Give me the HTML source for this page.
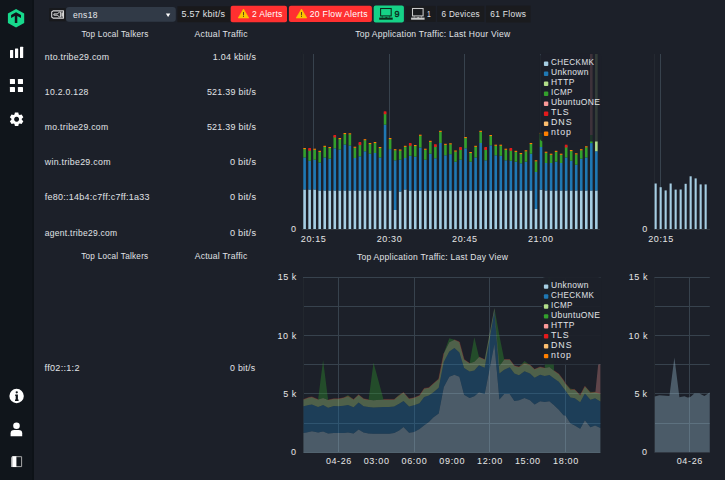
<!DOCTYPE html>
<html><head><meta charset="utf-8"><style>
html,body{margin:0;padding:0;background:#1c2029;width:725px;height:480px;overflow:hidden}
svg{display:block;font-family:"Liberation Sans",sans-serif}
</style></head><body>
<svg width="725" height="480" viewBox="0 0 725 480">
<rect width="725" height="480" fill="#1c2029"/>
<rect x="0.00" y="0.00" width="34.00" height="480.00" fill="#10151b"/>
<rect x="32.00" y="0.00" width="2.00" height="480.00" fill="#0d1217"/>
<polygon points="16.05,8.90 24.20,13.40 24.20,22.90 16.05,27.60 7.90,22.90 7.90,13.40" fill="#17d98c"/>
<path d="M16.05 12.2 L21.0 15.1 V18.0 L17.3 15.9 V23.0 H14.8 V15.9 L11.1 18.0 V15.1 Z" fill="#10151b"/>
<rect x="10.00" y="50.00" width="3.20" height="8.00" fill="#ffffff" rx="0.5"/>
<rect x="15.00" y="48.50" width="3.20" height="9.50" fill="#ffffff" rx="0.5"/>
<rect x="20.00" y="46.70" width="3.20" height="11.30" fill="#ffffff" rx="0.5"/>
<rect x="9.90" y="78.90" width="5.10" height="5.10" fill="#ffffff" rx="0.6"/>
<rect x="9.90" y="87.00" width="5.10" height="5.10" fill="#ffffff" rx="0.6"/>
<rect x="17.90" y="78.90" width="5.10" height="5.10" fill="#ffffff" rx="0.6"/>
<rect x="17.90" y="87.00" width="5.10" height="5.10" fill="#ffffff" rx="0.6"/>
<path d="M14.91 112.46 L18.29 112.46 L18.72 114.50 L19.66 115.04 L21.64 114.39 L23.33 117.32 L21.77 118.71 L21.77 119.79 L23.33 121.18 L21.64 124.11 L19.66 123.46 L18.72 124.00 L18.29 126.04 L14.91 126.04 L14.48 124.00 L13.54 123.46 L11.56 124.11 L9.87 121.18 L11.43 119.79 L11.43 118.71 L9.87 117.32 L11.56 114.39 L13.54 115.04 L14.48 114.50 Z M16.60 116.75 a2.5 2.5 0 1 0 0.01 0 Z" fill="#ffffff" fill-rule="evenodd"/>
<circle cx="16.6" cy="396" r="7.2" fill="#ffffff"/>
<circle cx="16.75" cy="392.3" r="1.15" fill="#10151b"/>
<path d="M15.2 394.6 H17.9 V399.6 H18.6 V400.9 H15.0 V399.6 H15.7 V395.9 H15.2 Z" fill="#10151b"/>
<circle cx="16.5" cy="425.8" r="3.3" fill="#ffffff"/>
<path d="M10.6 436.2 V433.3 Q10.6 430.0 14.2 430.0 H18.6 Q22.2 430.0 22.2 433.3 V436.2 Z" fill="#ffffff"/>
<defs><linearGradient id="tg" x1="0" x2="1" y1="0" y2="0"><stop offset="0" stop-color="#8a8d90"/><stop offset="0.45" stop-color="#ffffff"/><stop offset="1" stop-color="#ffffff"/></linearGradient></defs>
<path d="M12.4 456.7 H21.6 V466.6 H12.4 Z" fill="none" stroke="#b8b8b8" stroke-width="0.9"/>
<path d="M12.2 456.3 H16.4 V467.0 H11.0 V457.5 Z" fill="url(#tg)"/>
<rect x="49.20" y="8.10" width="16.50" height="13.20" fill="#18191c"/>
<path d="M51.7 12 L53.1 10.9 H63.5 V18.1 H53.1 L51.7 17.0 Z" fill="none" stroke="#d6d6d6" stroke-width="1.1" stroke-linejoin="round"/>
<path d="M53.9 13.9 H57.2 L59.7 12.0 H60.4 V17.0 H59.7 L57.2 15.2 H53.9 Z" fill="none" stroke="#d6d6d6" stroke-width="1.0"/>
<rect x="61.30" y="12.40" width="1.70" height="4.30" fill="#c8c8c8"/>
<rect x="66.00" y="7.00" width="109.80" height="14.80" fill="#313a47" rx="3"/>
<text transform="translate(72.90 17.70) scale(1 1.108)" font-size="8.49" fill="#e6e8ea" textLength="24.6" lengthAdjust="spacing">ens18</text>
<path d="M165.9 13.4 H170.3 L168.1 16.9 Z" fill="#ffffff"/>
<rect x="177.40" y="6.30" width="52.60" height="15.90" fill="#19191b"/>
<text transform="translate(181.60 16.80) scale(1 1.028)" font-size="8.95" fill="#e0e3e7" textLength="43.4" lengthAdjust="spacing">5.57 kbit/s</text>
<rect x="230.70" y="5.70" width="56.30" height="16.50" fill="#ff3030" rx="2"/>
<path d="M243.50 9.00 L248.80 18.00 L238.20 18.00 Z" fill="#f9c700" stroke="#f9c700" stroke-width="0.6" stroke-linejoin="round"/>
<rect x="243.00" y="12.00" width="1.0" height="3.3" fill="#5e4318"/>
<rect x="243.00" y="15.90" width="1.0" height="1.0" fill="#5e4318"/>
<text transform="translate(252.00 16.80) scale(1 1.074)" font-size="8.57" fill="#ffffff" textLength="30.4" lengthAdjust="spacing">2 Alerts</text>
<rect x="288.90" y="5.80" width="83.00" height="16.20" fill="#ff3030" rx="2"/>
<path d="M301.50 9.00 L306.80 18.00 L296.20 18.00 Z" fill="#f9c700" stroke="#f9c700" stroke-width="0.6" stroke-linejoin="round"/>
<rect x="301.00" y="12.00" width="1.0" height="3.3" fill="#5e4318"/>
<rect x="301.00" y="15.90" width="1.0" height="1.0" fill="#5e4318"/>
<text transform="translate(309.80 16.80) scale(1 1.065)" font-size="8.64" fill="#ffffff" textLength="57.7" lengthAdjust="spacing">20 Flow Alerts</text>
<rect x="373.70" y="5.60" width="30.20" height="16.80" fill="#16d287" rx="2"/>
<rect x="380.60" y="8.50" width="10.6" height="7.4" fill="none" stroke="#0d2a1c" stroke-width="1.05"/>
<rect x="381.70" y="16.50" width="1.2" height="0.9" fill="#0d2a1c"/>
<rect x="388.90" y="16.50" width="1.2" height="0.9" fill="#0d2a1c"/>
<rect x="385.40" y="16.90" width="1.9" height="0.9" fill="#0d2a1c"/>
<rect x="379.20" y="17.60" width="13.5" height="2.1" fill="#0d2a1c"/>
<text x="394.6" y="16.8" font-size="9.0" fill="#0b2418" stroke="#0b2418" stroke-width="0.35">9</text>
<rect x="405.70" y="5.90" width="30.00" height="16.00" fill="#1a1b1e"/>
<rect x="412.50" y="8.50" width="10.6" height="7.4" fill="none" stroke="#c9c9c9" stroke-width="1.05"/>
<rect x="413.60" y="16.50" width="1.2" height="0.9" fill="#c9c9c9"/>
<rect x="420.80" y="16.50" width="1.2" height="0.9" fill="#c9c9c9"/>
<rect x="417.30" y="16.90" width="1.9" height="0.9" fill="#c9c9c9"/>
<rect x="411.10" y="17.60" width="13.5" height="2.1" fill="#c9c9c9"/>
<text transform="translate(426.90 16.90) scale(1 1.361)" font-size="6.76" fill="#e0e3e7" textLength="4.0" lengthAdjust="spacing">1</text>
<rect x="437.20" y="5.90" width="47.00" height="16.00" fill="#1a1b1e"/>
<text transform="translate(441.50 16.90) scale(1 1.125)" font-size="8.18" fill="#e0e3e7" textLength="38.2" lengthAdjust="spacing">6 Devices</text>
<rect x="486.00" y="5.60" width="44.60" height="16.90" fill="#1a1b1e"/>
<text transform="translate(490.30 16.90) scale(1 1.100)" font-size="8.36" fill="#e0e3e7" textLength="35.6" lengthAdjust="spacing">61 Flows</text>
<text transform="translate(81.40 36.80) scale(1 1.126)" font-size="8.17" fill="#e0e3e7" textLength="67.0" lengthAdjust="spacing">Top Local Talkers</text>
<text transform="translate(194.60 36.80) scale(1 1.064)" font-size="8.65" fill="#e0e3e7" textLength="53.0" lengthAdjust="spacing">Actual Traffic</text>
<text transform="translate(44.80 59.90) scale(1 1.074)" font-size="8.76" fill="#e0e3e7" textLength="64.2" lengthAdjust="spacing">nto.tribe29.com</text>
<text transform="translate(212.80 59.90) scale(1 1.055)" font-size="8.91" fill="#e0e3e7" textLength="43.2" lengthAdjust="spacing">1.04 kbit/s</text>
<text transform="translate(44.80 95.10) scale(1 1.087)" font-size="8.65" fill="#e0e3e7" textLength="43.5" lengthAdjust="spacing">10.2.0.128</text>
<text transform="translate(206.90 95.10) scale(1 1.053)" font-size="8.93" fill="#e0e3e7" textLength="49.1" lengthAdjust="spacing">521.39 bit/s</text>
<text transform="translate(44.80 130.20) scale(1 1.089)" font-size="8.63" fill="#e0e3e7" textLength="63.3" lengthAdjust="spacing">mo.tribe29.com</text>
<text transform="translate(206.90 130.20) scale(1 1.053)" font-size="8.93" fill="#e0e3e7" textLength="49.1" lengthAdjust="spacing">521.39 bit/s</text>
<text transform="translate(44.80 165.30) scale(1 1.066)" font-size="8.82" fill="#e0e3e7" textLength="65.7" lengthAdjust="spacing">win.tribe29.com</text>
<text transform="translate(229.90 165.30) scale(1 1.022)" font-size="9.20" fill="#e0e3e7" textLength="26.1" lengthAdjust="spacing">0 bit/s</text>
<text transform="translate(44.80 200.30) scale(1 1.048)" font-size="8.97" fill="#e0e3e7" textLength="104.7" lengthAdjust="spacing">fe80::14b4:c7ff:c7ff:1a33</text>
<text transform="translate(229.90 200.30) scale(1 1.022)" font-size="9.20" fill="#e0e3e7" textLength="26.1" lengthAdjust="spacing">0 bit/s</text>
<text transform="translate(44.80 235.60) scale(1 1.107)" font-size="8.49" fill="#e0e3e7" textLength="72.3" lengthAdjust="spacing">agent.tribe29.com</text>
<text transform="translate(229.90 235.60) scale(1 1.022)" font-size="9.20" fill="#e0e3e7" textLength="26.1" lengthAdjust="spacing">0 bit/s</text>
<text transform="translate(81.20 259.30) scale(1 1.126)" font-size="8.17" fill="#e0e3e7" textLength="67.0" lengthAdjust="spacing">Top Local Talkers</text>
<text transform="translate(194.70 259.30) scale(1 1.072)" font-size="8.58" fill="#e0e3e7" textLength="52.6" lengthAdjust="spacing">Actual Traffic</text>
<text transform="translate(44.60 370.80) scale(1 1.030)" font-size="9.12" fill="#e0e3e7" textLength="34.9" lengthAdjust="spacing">ff02::1:2</text>
<text transform="translate(230.10 370.80) scale(1 1.067)" font-size="8.81" fill="#e0e3e7" textLength="25.0" lengthAdjust="spacing">0 bit/s</text>
<text transform="translate(355.20 37.20) scale(1 1.076)" font-size="8.55" fill="#e0e3e7" textLength="154.9" lengthAdjust="spacing">Top Application Traffic: Last Hour View</text>
<text transform="translate(357.00 259.70) scale(1 1.080)" font-size="8.52" fill="#e0e3e7" textLength="150.8" lengthAdjust="spacing">Top Application Traffic: Last Day View</text>
<line x1="303.5" y1="54" x2="303.5" y2="229" stroke="#22272e" stroke-width="1"/>
<line x1="313.5" y1="54" x2="313.5" y2="229" stroke="#37424d" stroke-width="1"/>
<line x1="389.5" y1="54" x2="389.5" y2="229" stroke="#37424d" stroke-width="1"/>
<line x1="464.5" y1="54" x2="464.5" y2="229" stroke="#37424d" stroke-width="1"/>
<line x1="540.5" y1="54" x2="540.5" y2="229" stroke="#37424d" stroke-width="1"/>
<line x1="302" y1="229.5" x2="600" y2="229.5" stroke="#2f353d" stroke-width="1"/>
<rect x="303.30" y="189.50" width="2.60" height="39.50" fill="#a6cee3"/>
<rect x="303.30" y="157.50" width="2.60" height="32.00" fill="#1f78b4"/>
<rect x="303.30" y="149.00" width="2.60" height="8.50" fill="#33a02c"/>
<rect x="303.30" y="148.00" width="2.60" height="1.10" fill="#ff7f00"/>
<rect x="308.33" y="189.50" width="2.60" height="39.50" fill="#a6cee3"/>
<rect x="308.33" y="160.80" width="2.60" height="28.70" fill="#1f78b4"/>
<rect x="308.33" y="149.00" width="2.60" height="11.80" fill="#33a02c"/>
<rect x="308.33" y="148.00" width="2.60" height="2.80" fill="#e31a1c"/>
<rect x="313.36" y="189.50" width="2.60" height="39.50" fill="#a6cee3"/>
<rect x="313.36" y="159.70" width="2.60" height="29.80" fill="#1f78b4"/>
<rect x="313.36" y="149.70" width="2.60" height="10.00" fill="#33a02c"/>
<rect x="313.36" y="148.70" width="2.60" height="1.10" fill="#ff7f00"/>
<rect x="318.39" y="190.50" width="2.60" height="38.50" fill="#a6cee3"/>
<rect x="318.39" y="162.50" width="2.60" height="28.00" fill="#1f78b4"/>
<rect x="318.39" y="151.80" width="2.60" height="10.70" fill="#33a02c"/>
<rect x="318.39" y="150.80" width="2.60" height="1.10" fill="#ff7f00"/>
<rect x="323.42" y="190.50" width="2.60" height="38.50" fill="#a6cee3"/>
<rect x="323.42" y="157.50" width="2.60" height="33.00" fill="#1f78b4"/>
<rect x="323.42" y="146.80" width="2.60" height="10.70" fill="#33a02c"/>
<rect x="323.42" y="145.80" width="2.60" height="1.10" fill="#ff7f00"/>
<rect x="328.45" y="190.50" width="2.60" height="38.50" fill="#a6cee3"/>
<rect x="328.45" y="158.70" width="2.60" height="31.80" fill="#1f78b4"/>
<rect x="328.45" y="148.00" width="2.60" height="10.70" fill="#33a02c"/>
<rect x="328.45" y="147.00" width="2.60" height="1.10" fill="#ff7f00"/>
<rect x="333.48" y="190.50" width="2.60" height="38.50" fill="#a6cee3"/>
<rect x="333.48" y="148.30" width="2.60" height="42.20" fill="#1f78b4"/>
<rect x="333.48" y="136.00" width="2.60" height="12.30" fill="#33a02c"/>
<rect x="333.48" y="135.00" width="2.60" height="2.50" fill="#e31a1c"/>
<rect x="338.51" y="190.50" width="2.60" height="38.50" fill="#a6cee3"/>
<rect x="338.51" y="149.50" width="2.60" height="41.00" fill="#1f78b4"/>
<rect x="338.51" y="139.00" width="2.60" height="10.50" fill="#33a02c"/>
<rect x="338.51" y="138.00" width="2.60" height="1.10" fill="#ff7f00"/>
<rect x="343.54" y="190.50" width="2.60" height="38.50" fill="#a6cee3"/>
<rect x="343.54" y="144.50" width="2.60" height="46.00" fill="#1f78b4"/>
<rect x="343.54" y="134.00" width="2.60" height="10.50" fill="#33a02c"/>
<rect x="343.54" y="133.00" width="2.60" height="1.10" fill="#ff7f00"/>
<rect x="348.57" y="190.50" width="2.60" height="38.50" fill="#a6cee3"/>
<rect x="348.57" y="145.50" width="2.60" height="45.00" fill="#1f78b4"/>
<rect x="348.57" y="134.30" width="2.60" height="11.20" fill="#33a02c"/>
<rect x="348.57" y="133.30" width="2.60" height="1.10" fill="#ff7f00"/>
<rect x="353.60" y="190.50" width="2.60" height="38.50" fill="#a6cee3"/>
<rect x="353.60" y="158.00" width="2.60" height="32.50" fill="#1f78b4"/>
<rect x="353.60" y="147.70" width="2.60" height="10.30" fill="#33a02c"/>
<rect x="353.60" y="146.70" width="2.60" height="1.10" fill="#ff7f00"/>
<rect x="358.63" y="190.50" width="2.60" height="38.50" fill="#a6cee3"/>
<rect x="358.63" y="156.30" width="2.60" height="34.20" fill="#1f78b4"/>
<rect x="358.63" y="143.00" width="2.60" height="13.30" fill="#33a02c"/>
<rect x="358.63" y="142.00" width="2.60" height="3.00" fill="#e31a1c"/>
<rect x="363.66" y="190.50" width="2.60" height="38.50" fill="#a6cee3"/>
<rect x="363.66" y="151.30" width="2.60" height="39.20" fill="#1f78b4"/>
<rect x="363.66" y="140.20" width="2.60" height="11.10" fill="#33a02c"/>
<rect x="363.66" y="139.20" width="2.60" height="1.10" fill="#ff7f00"/>
<rect x="368.69" y="190.50" width="2.60" height="38.50" fill="#a6cee3"/>
<rect x="368.69" y="153.70" width="2.60" height="36.80" fill="#1f78b4"/>
<rect x="368.69" y="144.00" width="2.60" height="9.70" fill="#33a02c"/>
<rect x="368.69" y="143.00" width="2.60" height="1.10" fill="#ff7f00"/>
<rect x="373.72" y="190.50" width="2.60" height="38.50" fill="#a6cee3"/>
<rect x="373.72" y="153.00" width="2.60" height="37.50" fill="#1f78b4"/>
<rect x="373.72" y="143.00" width="2.60" height="10.00" fill="#33a02c"/>
<rect x="373.72" y="142.00" width="2.60" height="1.10" fill="#ff7f00"/>
<rect x="378.75" y="190.50" width="2.60" height="38.50" fill="#a6cee3"/>
<rect x="378.75" y="157.50" width="2.60" height="33.00" fill="#1f78b4"/>
<rect x="378.75" y="148.00" width="2.60" height="9.50" fill="#33a02c"/>
<rect x="378.75" y="147.00" width="2.60" height="1.10" fill="#ff7f00"/>
<rect x="383.78" y="190.50" width="2.60" height="38.50" fill="#a6cee3"/>
<rect x="383.78" y="124.70" width="2.60" height="65.80" fill="#1f78b4"/>
<rect x="383.78" y="112.30" width="2.60" height="12.40" fill="#33a02c"/>
<rect x="383.78" y="111.30" width="2.60" height="2.90" fill="#e31a1c"/>
<rect x="388.81" y="190.50" width="2.60" height="38.50" fill="#a6cee3"/>
<rect x="388.81" y="149.20" width="2.60" height="41.30" fill="#1f78b4"/>
<rect x="388.81" y="139.00" width="2.60" height="10.20" fill="#33a02c"/>
<rect x="388.81" y="138.00" width="2.60" height="1.10" fill="#ff7f00"/>
<rect x="393.84" y="210.00" width="2.60" height="19.00" fill="#a6cee3"/>
<rect x="393.84" y="160.30" width="2.60" height="49.70" fill="#1f78b4"/>
<rect x="393.84" y="150.20" width="2.60" height="10.10" fill="#33a02c"/>
<rect x="393.84" y="149.20" width="2.60" height="1.10" fill="#ff7f00"/>
<rect x="398.87" y="191.50" width="2.60" height="37.50" fill="#a6cee3"/>
<rect x="398.87" y="159.70" width="2.60" height="31.80" fill="#1f78b4"/>
<rect x="398.87" y="150.50" width="2.60" height="9.20" fill="#33a02c"/>
<rect x="398.87" y="149.50" width="2.60" height="1.10" fill="#ff7f00"/>
<rect x="403.90" y="189.50" width="2.60" height="39.50" fill="#a6cee3"/>
<rect x="403.90" y="158.00" width="2.60" height="31.50" fill="#1f78b4"/>
<rect x="403.90" y="146.80" width="2.60" height="11.20" fill="#33a02c"/>
<rect x="403.90" y="145.80" width="2.60" height="1.10" fill="#ff7f00"/>
<rect x="408.93" y="190.50" width="2.60" height="38.50" fill="#a6cee3"/>
<rect x="408.93" y="155.80" width="2.60" height="34.70" fill="#1f78b4"/>
<rect x="408.93" y="144.00" width="2.60" height="11.80" fill="#33a02c"/>
<rect x="408.93" y="143.00" width="2.60" height="2.80" fill="#e31a1c"/>
<rect x="413.96" y="190.50" width="2.60" height="38.50" fill="#a6cee3"/>
<rect x="413.96" y="156.70" width="2.60" height="33.80" fill="#1f78b4"/>
<rect x="413.96" y="146.00" width="2.60" height="10.70" fill="#33a02c"/>
<rect x="413.96" y="145.00" width="2.60" height="1.10" fill="#ff7f00"/>
<rect x="418.99" y="190.50" width="2.60" height="38.50" fill="#a6cee3"/>
<rect x="418.99" y="147.50" width="2.60" height="43.00" fill="#1f78b4"/>
<rect x="418.99" y="135.70" width="2.60" height="11.80" fill="#33a02c"/>
<rect x="418.99" y="134.70" width="2.60" height="1.10" fill="#ff7f00"/>
<rect x="424.02" y="190.50" width="2.60" height="38.50" fill="#a6cee3"/>
<rect x="424.02" y="159.70" width="2.60" height="30.80" fill="#1f78b4"/>
<rect x="424.02" y="149.70" width="2.60" height="10.00" fill="#33a02c"/>
<rect x="424.02" y="148.70" width="2.60" height="1.10" fill="#ff7f00"/>
<rect x="429.05" y="190.50" width="2.60" height="38.50" fill="#a6cee3"/>
<rect x="429.05" y="153.70" width="2.60" height="36.80" fill="#1f78b4"/>
<rect x="429.05" y="141.80" width="2.60" height="11.90" fill="#33a02c"/>
<rect x="429.05" y="140.80" width="2.60" height="1.10" fill="#ff7f00"/>
<rect x="434.08" y="190.50" width="2.60" height="38.50" fill="#a6cee3"/>
<rect x="434.08" y="158.30" width="2.60" height="32.20" fill="#1f78b4"/>
<rect x="434.08" y="145.20" width="2.60" height="13.10" fill="#33a02c"/>
<rect x="434.08" y="144.20" width="2.60" height="2.80" fill="#e31a1c"/>
<rect x="439.11" y="190.50" width="2.60" height="38.50" fill="#a6cee3"/>
<rect x="439.11" y="143.00" width="2.60" height="47.50" fill="#1f78b4"/>
<rect x="439.11" y="131.80" width="2.60" height="11.20" fill="#33a02c"/>
<rect x="439.11" y="130.80" width="2.60" height="1.10" fill="#ff7f00"/>
<rect x="444.14" y="190.50" width="2.60" height="38.50" fill="#a6cee3"/>
<rect x="444.14" y="155.30" width="2.60" height="35.20" fill="#1f78b4"/>
<rect x="444.14" y="144.80" width="2.60" height="10.50" fill="#33a02c"/>
<rect x="444.14" y="143.80" width="2.60" height="1.10" fill="#ff7f00"/>
<rect x="449.17" y="190.50" width="2.60" height="38.50" fill="#a6cee3"/>
<rect x="449.17" y="154.20" width="2.60" height="36.30" fill="#1f78b4"/>
<rect x="449.17" y="144.30" width="2.60" height="9.90" fill="#33a02c"/>
<rect x="449.17" y="143.30" width="2.60" height="1.10" fill="#ff7f00"/>
<rect x="454.20" y="190.50" width="2.60" height="38.50" fill="#a6cee3"/>
<rect x="454.20" y="161.70" width="2.60" height="28.80" fill="#1f78b4"/>
<rect x="454.20" y="151.50" width="2.60" height="10.20" fill="#33a02c"/>
<rect x="454.20" y="150.50" width="2.60" height="1.10" fill="#ff7f00"/>
<rect x="459.23" y="190.50" width="2.60" height="38.50" fill="#a6cee3"/>
<rect x="459.23" y="159.70" width="2.60" height="30.80" fill="#1f78b4"/>
<rect x="459.23" y="148.00" width="2.60" height="11.70" fill="#33a02c"/>
<rect x="459.23" y="147.00" width="2.60" height="3.00" fill="#e31a1c"/>
<rect x="464.26" y="190.50" width="2.60" height="38.50" fill="#a6cee3"/>
<rect x="464.26" y="148.30" width="2.60" height="42.20" fill="#1f78b4"/>
<rect x="464.26" y="138.00" width="2.60" height="10.30" fill="#33a02c"/>
<rect x="464.26" y="137.00" width="2.60" height="1.10" fill="#ff7f00"/>
<rect x="469.29" y="190.50" width="2.60" height="38.50" fill="#a6cee3"/>
<rect x="469.29" y="161.70" width="2.60" height="28.80" fill="#1f78b4"/>
<rect x="469.29" y="153.00" width="2.60" height="8.70" fill="#33a02c"/>
<rect x="469.29" y="152.00" width="2.60" height="1.10" fill="#ff7f00"/>
<rect x="474.32" y="190.50" width="2.60" height="38.50" fill="#a6cee3"/>
<rect x="474.32" y="157.50" width="2.60" height="33.00" fill="#1f78b4"/>
<rect x="474.32" y="146.80" width="2.60" height="10.70" fill="#33a02c"/>
<rect x="474.32" y="145.80" width="2.60" height="1.10" fill="#ff7f00"/>
<rect x="479.35" y="190.50" width="2.60" height="38.50" fill="#a6cee3"/>
<rect x="479.35" y="143.00" width="2.60" height="47.50" fill="#1f78b4"/>
<rect x="479.35" y="131.80" width="2.60" height="11.20" fill="#33a02c"/>
<rect x="479.35" y="130.80" width="2.60" height="1.10" fill="#ff7f00"/>
<rect x="484.38" y="190.50" width="2.60" height="38.50" fill="#a6cee3"/>
<rect x="484.38" y="160.30" width="2.60" height="30.20" fill="#1f78b4"/>
<rect x="484.38" y="148.00" width="2.60" height="12.30" fill="#33a02c"/>
<rect x="484.38" y="147.00" width="2.60" height="3.00" fill="#e31a1c"/>
<rect x="489.41" y="190.50" width="2.60" height="38.50" fill="#a6cee3"/>
<rect x="489.41" y="145.30" width="2.60" height="45.20" fill="#1f78b4"/>
<rect x="489.41" y="136.00" width="2.60" height="9.30" fill="#33a02c"/>
<rect x="489.41" y="135.00" width="2.60" height="1.10" fill="#ff7f00"/>
<rect x="494.44" y="190.50" width="2.60" height="38.50" fill="#a6cee3"/>
<rect x="494.44" y="155.30" width="2.60" height="35.20" fill="#1f78b4"/>
<rect x="494.44" y="145.70" width="2.60" height="9.60" fill="#33a02c"/>
<rect x="494.44" y="144.70" width="2.60" height="1.10" fill="#ff7f00"/>
<rect x="499.47" y="190.50" width="2.60" height="38.50" fill="#a6cee3"/>
<rect x="499.47" y="155.80" width="2.60" height="34.70" fill="#1f78b4"/>
<rect x="499.47" y="145.70" width="2.60" height="10.10" fill="#33a02c"/>
<rect x="499.47" y="144.70" width="2.60" height="1.10" fill="#ff7f00"/>
<rect x="504.50" y="190.50" width="2.60" height="38.50" fill="#a6cee3"/>
<rect x="504.50" y="160.30" width="2.60" height="30.20" fill="#1f78b4"/>
<rect x="504.50" y="149.70" width="2.60" height="10.60" fill="#33a02c"/>
<rect x="504.50" y="148.70" width="2.60" height="1.10" fill="#ff7f00"/>
<rect x="509.53" y="190.50" width="2.60" height="38.50" fill="#a6cee3"/>
<rect x="509.53" y="160.80" width="2.60" height="29.70" fill="#1f78b4"/>
<rect x="509.53" y="149.00" width="2.60" height="11.80" fill="#33a02c"/>
<rect x="509.53" y="148.00" width="2.60" height="2.80" fill="#e31a1c"/>
<rect x="514.56" y="190.50" width="2.60" height="38.50" fill="#a6cee3"/>
<rect x="514.56" y="161.70" width="2.60" height="28.80" fill="#1f78b4"/>
<rect x="514.56" y="151.80" width="2.60" height="9.90" fill="#33a02c"/>
<rect x="514.56" y="150.80" width="2.60" height="1.10" fill="#ff7f00"/>
<rect x="519.59" y="190.50" width="2.60" height="38.50" fill="#a6cee3"/>
<rect x="519.59" y="163.30" width="2.60" height="27.20" fill="#1f78b4"/>
<rect x="519.59" y="154.00" width="2.60" height="9.30" fill="#33a02c"/>
<rect x="519.59" y="153.00" width="2.60" height="1.10" fill="#ff7f00"/>
<rect x="524.62" y="190.50" width="2.60" height="38.50" fill="#a6cee3"/>
<rect x="524.62" y="161.70" width="2.60" height="28.80" fill="#1f78b4"/>
<rect x="524.62" y="151.30" width="2.60" height="10.40" fill="#33a02c"/>
<rect x="524.62" y="150.30" width="2.60" height="1.10" fill="#ff7f00"/>
<rect x="529.65" y="190.50" width="2.60" height="38.50" fill="#a6cee3"/>
<rect x="529.65" y="153.70" width="2.60" height="36.80" fill="#1f78b4"/>
<rect x="529.65" y="144.00" width="2.60" height="9.70" fill="#33a02c"/>
<rect x="529.65" y="143.00" width="2.60" height="1.10" fill="#ff7f00"/>
<rect x="534.68" y="209.00" width="2.60" height="20.00" fill="#a6cee3"/>
<rect x="534.68" y="172.00" width="2.60" height="37.00" fill="#1f78b4"/>
<rect x="534.68" y="161.30" width="2.60" height="10.70" fill="#33a02c"/>
<rect x="534.68" y="160.30" width="2.60" height="1.10" fill="#ff7f00"/>
<rect x="539.71" y="189.70" width="2.60" height="39.30" fill="#a6cee3"/>
<rect x="539.71" y="147.00" width="2.60" height="42.70" fill="#1f78b4"/>
<rect x="539.71" y="133.80" width="2.60" height="13.20" fill="#33a02c"/>
<rect x="539.71" y="132.80" width="2.60" height="1.10" fill="#ff7f00"/>
<rect x="544.74" y="190.50" width="2.60" height="38.50" fill="#a6cee3"/>
<rect x="544.74" y="163.00" width="2.60" height="27.50" fill="#1f78b4"/>
<rect x="544.74" y="152.70" width="2.60" height="10.30" fill="#33a02c"/>
<rect x="544.74" y="151.70" width="2.60" height="1.10" fill="#ff7f00"/>
<rect x="549.77" y="190.50" width="2.60" height="38.50" fill="#a6cee3"/>
<rect x="549.77" y="163.00" width="2.60" height="27.50" fill="#1f78b4"/>
<rect x="549.77" y="154.70" width="2.60" height="8.30" fill="#33a02c"/>
<rect x="549.77" y="153.70" width="2.60" height="1.10" fill="#ff7f00"/>
<rect x="554.80" y="190.50" width="2.60" height="38.50" fill="#a6cee3"/>
<rect x="554.80" y="161.70" width="2.60" height="28.80" fill="#1f78b4"/>
<rect x="554.80" y="151.80" width="2.60" height="9.90" fill="#33a02c"/>
<rect x="554.80" y="150.80" width="2.60" height="1.10" fill="#ff7f00"/>
<rect x="559.83" y="190.50" width="2.60" height="38.50" fill="#a6cee3"/>
<rect x="559.83" y="163.00" width="2.60" height="27.50" fill="#1f78b4"/>
<rect x="559.83" y="154.70" width="2.60" height="8.30" fill="#33a02c"/>
<rect x="559.83" y="153.70" width="2.60" height="1.10" fill="#ff7f00"/>
<rect x="564.86" y="190.50" width="2.60" height="38.50" fill="#a6cee3"/>
<rect x="564.86" y="157.50" width="2.60" height="33.00" fill="#1f78b4"/>
<rect x="564.86" y="145.70" width="2.60" height="11.80" fill="#33a02c"/>
<rect x="564.86" y="144.70" width="2.60" height="2.80" fill="#e31a1c"/>
<rect x="569.89" y="190.50" width="2.60" height="38.50" fill="#a6cee3"/>
<rect x="569.89" y="160.80" width="2.60" height="29.70" fill="#1f78b4"/>
<rect x="569.89" y="151.00" width="2.60" height="9.80" fill="#33a02c"/>
<rect x="569.89" y="150.00" width="2.60" height="1.10" fill="#ff7f00"/>
<rect x="574.92" y="190.50" width="2.60" height="38.50" fill="#a6cee3"/>
<rect x="574.92" y="164.70" width="2.60" height="25.80" fill="#1f78b4"/>
<rect x="574.92" y="154.30" width="2.60" height="10.40" fill="#33a02c"/>
<rect x="574.92" y="153.30" width="2.60" height="1.10" fill="#ff7f00"/>
<rect x="579.95" y="190.50" width="2.60" height="38.50" fill="#a6cee3"/>
<rect x="579.95" y="158.70" width="2.60" height="31.80" fill="#1f78b4"/>
<rect x="579.95" y="150.20" width="2.60" height="8.50" fill="#33a02c"/>
<rect x="579.95" y="149.20" width="2.60" height="1.10" fill="#ff7f00"/>
<rect x="584.98" y="190.50" width="2.60" height="38.50" fill="#a6cee3"/>
<rect x="584.98" y="157.50" width="2.60" height="33.00" fill="#1f78b4"/>
<rect x="584.98" y="147.30" width="2.60" height="10.20" fill="#33a02c"/>
<rect x="584.98" y="146.30" width="2.60" height="1.10" fill="#ff7f00"/>
<rect x="590.01" y="190.50" width="2.60" height="38.50" fill="#a6cee3"/>
<rect x="590.01" y="143.10" width="2.60" height="47.40" fill="#1f78b4"/>
<rect x="590.01" y="135.00" width="2.60" height="8.10" fill="#33a02c"/>
<rect x="590.01" y="54.00" width="2.60" height="81.00" fill="#fb9a99"/>
<rect x="595.04" y="190.50" width="2.60" height="38.50" fill="#a6cee3"/>
<rect x="595.04" y="151.25" width="2.60" height="39.25" fill="#1f78b4"/>
<rect x="595.04" y="54.00" width="2.60" height="97.25" fill="#b2df8a"/>
<rect x="539.80" y="53.50" width="61.50" height="88.00" fill="#1c2029" rx="4" fill-opacity="0.85"/>
<rect x="543.90" y="61.50" width="4.40" height="4.40" fill="#a6cee3" rx="1"/>
<text transform="translate(551.00 65.40) scale(1 1.089)" font-size="8.08" fill="#e0e3e7" textLength="43.0" lengthAdjust="spacing">CHECKMK</text>
<rect x="543.90" y="71.50" width="4.40" height="4.40" fill="#1f78b4" rx="1"/>
<text transform="translate(551.00 75.40) scale(1 1.041)" font-size="8.46" fill="#e0e3e7" textLength="37.5" lengthAdjust="spacing">Unknown</text>
<rect x="543.90" y="81.50" width="4.40" height="4.40" fill="#b2df8a" rx="1"/>
<text transform="translate(551.00 85.40) scale(1 1.040)" font-size="8.46" fill="#e0e3e7" textLength="23.5" lengthAdjust="spacing">HTTP</text>
<rect x="543.90" y="91.50" width="4.40" height="4.40" fill="#33a02c" rx="1"/>
<text transform="translate(551.00 95.40) scale(1 1.089)" font-size="8.08" fill="#e0e3e7" textLength="21.5" lengthAdjust="spacing">ICMP</text>
<rect x="543.90" y="101.50" width="4.40" height="4.40" fill="#fb9a99" rx="1"/>
<text transform="translate(551.00 105.40) scale(1 1.030)" font-size="8.54" fill="#e0e3e7" textLength="49.0" lengthAdjust="spacing">UbuntuONE</text>
<rect x="543.90" y="111.50" width="4.40" height="4.40" fill="#e31a1c" rx="1"/>
<text transform="translate(551.00 115.40) scale(1 1.000)" font-size="8.80" fill="#e0e3e7" textLength="17.5" lengthAdjust="spacing">TLS</text>
<rect x="543.90" y="121.50" width="4.40" height="4.40" fill="#fdbf6f" rx="1"/>
<text transform="translate(551.00 125.40) scale(1 1.000)" font-size="8.80" fill="#e0e3e7" textLength="20.5" lengthAdjust="spacing">DNS</text>
<rect x="543.90" y="131.50" width="4.40" height="4.40" fill="#ff7f00" rx="1"/>
<text transform="translate(551.00 135.40) scale(1 1.000)" font-size="8.80" fill="#e0e3e7" textLength="20.0" lengthAdjust="spacing">ntop</text>
<text x="291.00" y="232.40" font-size="9.0" fill="#e6e6e6" textLength="5.0" lengthAdjust="spacing">0</text>
<text x="300.80" y="241.90" font-size="9.0" fill="#e6e6e6" textLength="25.0" lengthAdjust="spacing">20:15</text>
<text x="376.70" y="241.90" font-size="9.0" fill="#e6e6e6" textLength="25.0" lengthAdjust="spacing">20:30</text>
<text x="452.10" y="241.90" font-size="9.0" fill="#e6e6e6" textLength="25.0" lengthAdjust="spacing">20:45</text>
<text x="527.90" y="241.90" font-size="9.0" fill="#e6e6e6" textLength="25.0" lengthAdjust="spacing">21:00</text>
<line x1="654.4" y1="54" x2="654.4" y2="229" stroke="#262b33" stroke-width="1"/>
<line x1="660.5" y1="54" x2="660.5" y2="229" stroke="#37424d" stroke-width="1"/>
<line x1="654" y1="229.5" x2="710" y2="229.5" stroke="#2f353d" stroke-width="1"/>
<rect x="654.60" y="183.50" width="2.10" height="45.50" fill="#a6cee3"/>
<rect x="659.60" y="187.20" width="2.10" height="41.80" fill="#a6cee3"/>
<rect x="664.60" y="190.40" width="2.10" height="38.60" fill="#a6cee3"/>
<rect x="669.60" y="183.50" width="2.10" height="45.50" fill="#a6cee3"/>
<rect x="674.60" y="189.60" width="2.10" height="39.40" fill="#a6cee3"/>
<rect x="679.60" y="189.50" width="2.10" height="39.50" fill="#a6cee3"/>
<rect x="684.60" y="183.80" width="2.10" height="45.20" fill="#a6cee3"/>
<rect x="689.60" y="176.30" width="2.10" height="52.70" fill="#a6cee3"/>
<rect x="694.60" y="178.40" width="2.10" height="50.60" fill="#a6cee3"/>
<rect x="699.60" y="184.40" width="2.10" height="44.60" fill="#a6cee3"/>
<rect x="704.60" y="184.40" width="2.10" height="44.60" fill="#a6cee3"/>
<text x="642.20" y="232.20" font-size="9.0" fill="#e6e6e6" textLength="5.0" lengthAdjust="spacing">0</text>
<text x="648.20" y="242.20" font-size="9.0" fill="#e6e6e6" textLength="25.0" lengthAdjust="spacing">20:15</text>
<line x1="303" y1="277.5" x2="600.5" y2="277.5" stroke="#37424d" stroke-width="1"/>
<line x1="303" y1="306.5" x2="600.5" y2="306.5" stroke="#37424d" stroke-width="1"/>
<line x1="303" y1="335.5" x2="600.5" y2="335.5" stroke="#37424d" stroke-width="1"/>
<line x1="303" y1="364.5" x2="600.5" y2="364.5" stroke="#37424d" stroke-width="1"/>
<line x1="303" y1="393.5" x2="600.5" y2="393.5" stroke="#37424d" stroke-width="1"/>
<line x1="303" y1="423.5" x2="600.5" y2="423.5" stroke="#37424d" stroke-width="1"/>
<line x1="338.5" y1="277" x2="338.5" y2="452" stroke="#37424d" stroke-width="1"/>
<line x1="414.5" y1="277" x2="414.5" y2="452" stroke="#37424d" stroke-width="1"/>
<line x1="489.5" y1="277" x2="489.5" y2="452" stroke="#37424d" stroke-width="1"/>
<line x1="565.5" y1="277" x2="565.5" y2="452" stroke="#37424d" stroke-width="1"/>
<line x1="303.5" y1="278" x2="303.5" y2="452" stroke="#22272e" stroke-width="1"/>
<line x1="303" y1="452.5" x2="600.5" y2="452.5" stroke="#2a3038" stroke-width="1" stroke-opacity="0.8"/>
<defs><clipPath id="bc"><rect x="300" y="277" width="301" height="177"/></clipPath></defs><g clip-path="url(#bc)">
<polygon points="303.50,433.10 308.80,432.00 311.90,431.25 318.10,432.50 323.10,431.50 328.10,433.50 333.75,433.10 338.60,433.10 343.50,433.00 348.00,432.50 353.60,433.50 358.60,429.40 363.60,432.50 368.60,433.50 373.50,433.80 383.50,433.75 389.10,433.75 394.10,433.10 399.10,430.60 403.50,426.90 409.10,432.75 414.00,431.90 419.50,429.00 424.20,425.20 428.80,422.00 433.50,417.30 438.70,413.40 443.80,386.90 449.30,376.70 454.40,374.70 459.40,376.70 464.10,394.70 469.60,398.10 474.30,396.25 479.00,392.30 484.70,393.90 494.40,343.90 499.40,399.40 504.20,393.90 509.70,393.90 514.40,401.00 519.00,400.20 524.50,398.10 530.00,400.20 534.60,404.40 540.10,401.25 544.75,402.00 549.40,401.25 554.10,405.20 558.80,409.80 563.50,415.30 565.40,415.50 570.40,423.30 574.75,425.60 580.20,428.75 584.90,420.20 590.40,427.20 595.10,425.60 600.40,428.00 600.40,453.00 595.10,453.00 590.40,453.00 584.90,453.00 580.20,453.00 574.75,453.00 570.40,453.00 565.40,453.00 563.50,453.00 558.80,453.00 554.10,453.00 549.40,453.00 544.75,453.00 540.10,453.00 534.60,453.00 530.00,453.00 524.50,453.00 519.00,453.00 514.40,453.00 509.70,453.00 504.20,453.00 499.40,453.00 494.40,453.00 484.70,453.00 479.00,453.00 474.30,453.00 469.60,453.00 464.10,453.00 459.40,453.00 454.40,453.00 449.30,453.00 443.80,453.00 438.70,453.00 433.50,453.00 428.80,453.00 424.20,453.00 419.50,453.00 414.00,453.00 409.10,453.00 403.50,453.00 399.10,453.00 394.10,453.00 389.10,453.00 383.50,453.00 373.50,453.00 368.60,453.00 363.60,453.00 358.60,453.00 353.60,453.00 348.00,453.00 343.50,453.00 338.60,453.00 333.75,453.00 328.10,453.00 323.10,453.00 318.10,453.00 311.90,453.00 308.80,453.00 303.50,453.00" fill="#a6cee3" fill-opacity="0.34"/>
<polygon points="303.50,406.25 308.80,405.00 311.90,404.40 318.10,406.90 323.10,405.00 328.10,407.75 333.75,406.00 338.60,406.25 343.50,405.80 348.00,405.00 353.60,407.25 358.60,402.50 363.60,406.25 368.60,406.90 373.50,407.50 383.50,406.90 389.10,406.90 394.10,406.50 399.10,403.75 403.50,401.00 409.10,406.50 414.00,405.30 419.50,403.30 424.20,397.00 428.80,395.50 433.50,392.30 438.70,387.70 443.80,361.90 449.30,351.60 454.40,348.10 459.40,352.50 464.10,368.00 469.60,371.50 474.30,370.50 479.00,365.20 484.70,367.70 494.40,311.50 499.40,373.60 504.20,369.70 509.70,367.30 514.40,373.60 519.00,375.20 524.50,371.25 530.00,373.60 534.60,377.80 540.10,374.70 544.75,376.00 549.40,375.00 554.10,378.60 558.80,381.70 563.50,388.00 565.40,390.50 570.40,397.50 574.75,398.30 580.20,402.20 584.90,393.60 590.40,399.80 595.10,398.30 600.40,401.40 600.40,428.00 595.10,425.60 590.40,427.20 584.90,420.20 580.20,428.75 574.75,425.60 570.40,423.30 565.40,415.50 563.50,415.30 558.80,409.80 554.10,405.20 549.40,401.25 544.75,402.00 540.10,401.25 534.60,404.40 530.00,400.20 524.50,398.10 519.00,400.20 514.40,401.00 509.70,393.90 504.20,393.90 499.40,399.40 494.40,343.90 484.70,393.90 479.00,392.30 474.30,396.25 469.60,398.10 464.10,394.70 459.40,376.70 454.40,374.70 449.30,376.70 443.80,386.90 438.70,413.40 433.50,417.30 428.80,422.00 424.20,425.20 419.50,429.00 414.00,431.90 409.10,432.75 403.50,426.90 399.10,430.60 394.10,433.10 389.10,433.75 383.50,433.75 373.50,433.80 368.60,433.50 363.60,432.50 358.60,429.40 353.60,433.50 348.00,432.50 343.50,433.00 338.60,433.10 333.75,433.10 328.10,433.50 323.10,431.50 318.10,432.50 311.90,431.25 308.80,432.00 303.50,433.10" fill="#1f78b4" fill-opacity="0.34"/>
<polygon points="303.50,399.40 308.80,397.50 311.90,396.90 318.10,399.40 323.10,398.10 328.10,400.00 333.75,398.75 338.60,398.75 343.50,397.80 348.00,396.25 353.60,399.40 358.60,394.75 363.60,398.75 368.60,399.75 373.50,400.20 383.50,399.40 389.10,399.40 394.10,399.40 399.10,395.60 403.50,392.50 409.10,398.75 414.00,397.80 419.50,395.50 424.20,388.40 428.80,387.70 433.50,383.40 438.70,379.00 443.80,353.30 449.30,342.20 454.40,339.80 459.40,341.90 464.10,359.40 469.60,363.30 474.30,361.70 479.00,357.00 484.70,359.50 494.40,308.00 499.40,366.00 504.20,359.50 509.70,359.50 514.40,365.80 519.00,366.90 524.50,363.40 530.00,365.00 534.60,369.20 540.10,366.90 544.75,368.10 549.40,366.90 554.10,370.80 558.80,373.90 563.50,380.20 565.40,383.40 570.40,389.70 574.75,389.40 580.20,395.20 584.90,386.25 590.40,392.80 595.10,392.00 600.40,393.60 600.40,401.40 595.10,398.30 590.40,399.80 584.90,393.60 580.20,402.20 574.75,398.30 570.40,397.50 565.40,390.50 563.50,388.00 558.80,381.70 554.10,378.60 549.40,375.00 544.75,376.00 540.10,374.70 534.60,377.80 530.00,373.60 524.50,371.25 519.00,375.20 514.40,373.60 509.70,367.30 504.20,369.70 499.40,373.60 494.40,311.50 484.70,367.70 479.00,365.20 474.30,370.50 469.60,371.50 464.10,368.00 459.40,352.50 454.40,348.10 449.30,351.60 443.80,361.90 438.70,387.70 433.50,392.30 428.80,395.50 424.20,397.00 419.50,403.30 414.00,405.30 409.10,406.50 403.50,401.00 399.10,403.75 394.10,406.50 389.10,406.90 383.50,406.90 373.50,407.50 368.60,406.90 363.60,406.25 358.60,402.50 353.60,407.25 348.00,405.00 343.50,405.80 338.60,406.25 333.75,406.00 328.10,407.75 323.10,405.00 318.10,406.90 311.90,404.40 308.80,405.00 303.50,406.25" fill="#b2df8a" fill-opacity="0.34"/>
<polygon points="303.50,399.40 308.80,397.50 311.90,396.90 318.10,399.40 323.10,360.00 328.10,400.00 333.75,398.75 338.60,398.75 343.50,397.80 348.00,395.00 353.60,399.40 358.60,394.75 363.60,398.75 368.60,399.75 373.50,362.60 383.50,399.40 389.10,399.40 394.10,399.40 399.10,394.70 403.50,392.50 409.10,398.75 414.00,397.80 419.50,395.50 424.20,388.40 428.80,387.70 433.50,383.40 438.70,379.00 443.80,353.30 449.30,338.30 454.40,339.80 459.40,341.90 464.10,359.40 469.60,363.30 474.30,337.20 479.00,357.00 484.70,359.50 494.40,308.00 499.40,335.80 504.20,359.50 509.70,359.50 514.40,365.80 519.00,366.90 524.50,361.10 530.00,365.00 534.60,369.20 540.10,366.90 544.75,368.10 549.40,250.00 554.10,370.80 558.80,373.90 563.50,380.20 565.40,383.40 570.40,388.60 574.75,389.40 580.20,395.20 584.90,386.25 590.40,391.80 595.10,392.00 600.40,393.60 600.40,393.60 595.10,392.00 590.40,392.80 584.90,386.25 580.20,395.20 574.75,389.40 570.40,389.70 565.40,383.40 563.50,380.20 558.80,373.90 554.10,370.80 549.40,366.90 544.75,368.10 540.10,366.90 534.60,369.20 530.00,365.00 524.50,363.40 519.00,366.90 514.40,365.80 509.70,359.50 504.20,359.50 499.40,366.00 494.40,308.00 484.70,359.50 479.00,357.00 474.30,361.70 469.60,363.30 464.10,359.40 459.40,341.90 454.40,339.80 449.30,342.20 443.80,353.30 438.70,379.00 433.50,383.40 428.80,387.70 424.20,388.40 419.50,395.50 414.00,397.80 409.10,398.75 403.50,392.50 399.10,395.60 394.10,399.40 389.10,399.40 383.50,399.40 373.50,400.20 368.60,399.75 363.60,398.75 358.60,394.75 353.60,399.40 348.00,396.25 343.50,397.80 338.60,398.75 333.75,398.75 328.10,400.00 323.10,398.10 318.10,399.40 311.90,396.90 308.80,397.50 303.50,399.40" fill="#33a02c" fill-opacity="0.34"/>
<polygon points="595.4,392.2 598.2,364.2 600.4,364.2 600.4,393.6" fill="#fb9a99" fill-opacity="0.3"/>
<polyline points="303.50,399.40 308.80,397.50 311.90,396.90 318.10,399.40" fill="none" stroke="#c0302c" stroke-opacity="0.35" stroke-width="0.8"/>
<polyline points="328.10,400.00 333.75,398.75 338.60,398.75 343.50,397.80 348.00,396.25 353.60,399.40 358.60,394.75 363.60,398.75 368.60,399.75" fill="none" stroke="#c0302c" stroke-opacity="0.35" stroke-width="0.8"/>
<polyline points="383.50,399.40 389.10,399.40 394.10,399.40 399.10,395.60 403.50,392.50 409.10,398.75 414.00,397.80 419.50,395.50 424.20,388.40 428.80,387.70 433.50,383.40 438.70,379.00 443.80,353.30" fill="none" stroke="#c0302c" stroke-opacity="0.35" stroke-width="0.8"/>
<polyline points="454.40,339.80 459.40,341.90 464.10,359.40 469.60,363.30" fill="none" stroke="#c0302c" stroke-opacity="0.35" stroke-width="0.8"/>
<polyline points="479.00,357.00 484.70,359.50" fill="none" stroke="#c0302c" stroke-opacity="0.35" stroke-width="0.8"/>
<polyline points="504.20,359.50 509.70,359.50 514.40,365.80 519.00,366.90 524.50,363.40 530.00,365.00 534.60,369.20 540.10,366.90 544.75,368.10" fill="none" stroke="#c0302c" stroke-opacity="0.35" stroke-width="0.8"/>
<polyline points="554.10,370.80 558.80,373.90 563.50,380.20 565.40,383.40 570.40,389.70 574.75,389.40 580.20,395.20 584.90,386.25 590.40,392.80 595.10,392.00 600.40,393.60" fill="none" stroke="#c0302c" stroke-opacity="0.35" stroke-width="0.8"/>
</g>
<rect x="541.80" y="277.00" width="59.80" height="87.50" fill="#1c2029" rx="4" fill-opacity="0.93"/>
<rect x="543.90" y="284.40" width="4.40" height="4.40" fill="#a6cee3" rx="1"/>
<text transform="translate(551.00 288.30) scale(1 1.041)" font-size="8.46" fill="#e0e3e7" textLength="37.5" lengthAdjust="spacing">Unknown</text>
<rect x="543.90" y="294.33" width="4.40" height="4.40" fill="#1f78b4" rx="1"/>
<text transform="translate(551.00 298.23) scale(1 1.089)" font-size="8.08" fill="#e0e3e7" textLength="43.0" lengthAdjust="spacing">CHECKMK</text>
<rect x="543.90" y="304.26" width="4.40" height="4.40" fill="#b2df8a" rx="1"/>
<text transform="translate(551.00 308.16) scale(1 1.089)" font-size="8.08" fill="#e0e3e7" textLength="21.5" lengthAdjust="spacing">ICMP</text>
<rect x="543.90" y="314.19" width="4.40" height="4.40" fill="#33a02c" rx="1"/>
<text transform="translate(551.00 318.09) scale(1 1.030)" font-size="8.54" fill="#e0e3e7" textLength="49.0" lengthAdjust="spacing">UbuntuONE</text>
<rect x="543.90" y="324.12" width="4.40" height="4.40" fill="#fb9a99" rx="1"/>
<text transform="translate(551.00 328.02) scale(1 1.040)" font-size="8.46" fill="#e0e3e7" textLength="23.5" lengthAdjust="spacing">HTTP</text>
<rect x="543.90" y="334.05" width="4.40" height="4.40" fill="#e31a1c" rx="1"/>
<text transform="translate(551.00 337.95) scale(1 1.000)" font-size="8.80" fill="#e0e3e7" textLength="17.5" lengthAdjust="spacing">TLS</text>
<rect x="543.90" y="343.98" width="4.40" height="4.40" fill="#fdbf6f" rx="1"/>
<text transform="translate(551.00 347.88) scale(1 1.000)" font-size="8.80" fill="#e0e3e7" textLength="20.5" lengthAdjust="spacing">DNS</text>
<rect x="543.90" y="353.91" width="4.40" height="4.40" fill="#ff7f00" rx="1"/>
<text transform="translate(551.00 357.81) scale(1 1.000)" font-size="8.80" fill="#e0e3e7" textLength="20.0" lengthAdjust="spacing">ntop</text>
<text x="277.70" y="280.20" font-size="9.0" fill="#e6e6e6" textLength="18.6" lengthAdjust="spacing">15 k</text>
<text x="277.50" y="338.70" font-size="9.0" fill="#e6e6e6" textLength="18.8" lengthAdjust="spacing">10 k</text>
<text x="283.30" y="397.00" font-size="9.0" fill="#e6e6e6" textLength="13.0" lengthAdjust="spacing">5 k</text>
<text x="291.00" y="455.00" font-size="9.0" fill="#e6e6e6" textLength="5.0" lengthAdjust="spacing">0</text>
<text x="326.00" y="464.40" font-size="9.0" fill="#e6e6e6" textLength="25.2" lengthAdjust="spacing">04-26</text>
<text x="363.70" y="464.40" font-size="9.0" fill="#e6e6e6" textLength="25.2" lengthAdjust="spacing">03:00</text>
<text x="401.50" y="464.40" font-size="9.0" fill="#e6e6e6" textLength="25.2" lengthAdjust="spacing">06:00</text>
<text x="439.30" y="464.40" font-size="9.0" fill="#e6e6e6" textLength="25.2" lengthAdjust="spacing">09:00</text>
<text x="477.00" y="464.40" font-size="9.0" fill="#e6e6e6" textLength="25.2" lengthAdjust="spacing">12:00</text>
<text x="514.90" y="464.40" font-size="9.0" fill="#e6e6e6" textLength="25.2" lengthAdjust="spacing">15:00</text>
<text x="553.10" y="464.40" font-size="9.0" fill="#e6e6e6" textLength="25.2" lengthAdjust="spacing">18:00</text>
<line x1="654.4" y1="277.5" x2="709.8" y2="277.5" stroke="#37424d" stroke-width="1"/>
<line x1="654.4" y1="306.5" x2="709.8" y2="306.5" stroke="#37424d" stroke-width="1"/>
<line x1="654.4" y1="335.5" x2="709.8" y2="335.5" stroke="#37424d" stroke-width="1"/>
<line x1="654.4" y1="364.5" x2="709.8" y2="364.5" stroke="#37424d" stroke-width="1"/>
<line x1="654.4" y1="393.5" x2="709.8" y2="393.5" stroke="#37424d" stroke-width="1"/>
<line x1="654.4" y1="423.5" x2="709.8" y2="423.5" stroke="#37424d" stroke-width="1"/>
<line x1="689.5" y1="277" x2="689.5" y2="452" stroke="#37424d" stroke-width="1"/>
<line x1="654.5" y1="278" x2="654.5" y2="452" stroke="#22272e" stroke-width="1"/>
<polygon points="654.75,396.50 659.40,395.25 669.40,396.00 674.40,357.50 679.40,397.25 684.40,396.25 687.50,397.50 690.00,397.25 694.40,393.50 699.40,393.50 704.40,396.00 709.75,392.50 709.75,453.00 654.75,453.00" fill="#a6cee3" fill-opacity="0.34"/>
<line x1="654" y1="452.5" x2="710" y2="452.5" stroke="#2a3038" stroke-width="1" stroke-opacity="0.8"/>
<text x="628.70" y="280.00" font-size="9.0" fill="#e6e6e6" textLength="18.8" lengthAdjust="spacing">15 k</text>
<text x="628.50" y="338.70" font-size="9.0" fill="#e6e6e6" textLength="19.0" lengthAdjust="spacing">10 k</text>
<text x="634.60" y="397.00" font-size="9.0" fill="#e6e6e6" textLength="12.5" lengthAdjust="spacing">5 k</text>
<text x="642.00" y="454.60" font-size="9.0" fill="#e6e6e6" textLength="5.0" lengthAdjust="spacing">0</text>
<text x="676.70" y="463.80" font-size="9.0" fill="#e6e6e6" textLength="25.6" lengthAdjust="spacing">04-26</text>
</svg>
</body></html>
